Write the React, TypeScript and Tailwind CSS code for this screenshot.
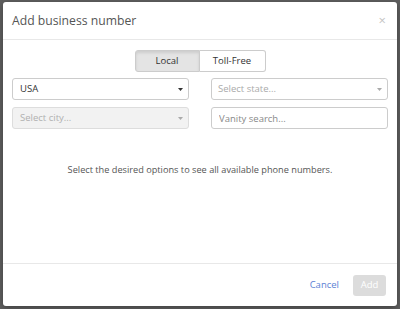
import { useState } from 'react';

function Caret({ light }: { light?: boolean }) {
    return (
        <svg width="5" height="3" viewBox="0 0 5 3" className={light ? 'text-[#aaa]' : 'text-[#333]'}>
            <path d="M0 0h5L2.5 3z" fill="currentColor" />
        </svg>
    );
}

export default function App() {
    const [mode, setMode] = useState<'local' | 'toll'>('local');

    return (
        <div className="w-[400px] h-[309px] bg-[#5e5e5e] pt-[2px] pl-[3px] pr-[3px] pb-[3px] font-['Open_Sans',sans-serif] text-[#555]">
            {/* Modal */}
            <div className="h-[304px] bg-white rounded-[3px] flex flex-col shadow-[0_2px_6px_rgba(0,0,0,0.3)]">
                {/* Header */}
                <div className="h-[38px] flex items-center justify-between pl-[9px] pr-[11px] border-b border-[#e8e8e8]">
                    <h2 className="text-[12.2px] text-[#555] pt-[2px]">Add business number</h2>
                    <button className="text-[#c4c4c4] text-[13px] leading-none">×</button>
                </div>

                {/* Body */}
                <div className="flex-1 px-[9px] pt-[10px]">
                    <div className="flex justify-center">
                        <div className="flex">
                            <button
                                onClick={() => setMode('local')}
                                className={`w-[65px] h-[22px] text-[9.5px] text-[#333] border border-[#ccc] rounded-l-[3px] ${mode === 'local' ? 'bg-[#e4e4e4] shadow-[inset_0_2px_3px_rgba(0,0,0,0.1)]' : 'bg-white'}`}
                            >
                                Local
                            </button>
                            <button
                                onClick={() => setMode('toll')}
                                className={`w-[66px] h-[22px] text-[9.5px] text-[#333] border border-l-0 border-[#ccc] rounded-r-[3px] ${mode === 'toll' ? 'bg-[#e4e4e4] shadow-[inset_0_2px_3px_rgba(0,0,0,0.1)]' : 'bg-white'}`}
                            >
                                Toll-Free
                            </button>
                        </div>
                    </div>

                    <div className="grid grid-cols-[177px_177px] justify-between gap-y-[7px] mt-[6px]">
                        <div className="h-[22px] border border-[#ccc] rounded-[3px] flex items-center justify-between pl-[7px] pr-[5px] text-[9.5px] text-[#333]">
                            <span>USA</span>
                            <Caret />
                        </div>
                        <div className="h-[22px] border border-[#ccc] rounded-[3px] flex items-center justify-between pl-[6px] pr-[5px] text-[9.5px] text-[#aaa]">
                            <span>Select state...</span>
                            <Caret light />
                        </div>
                        <div className="h-[22px] border border-[#ddd] bg-[#f2f2f2] rounded-[3px] flex items-center justify-between pl-[7px] pr-[5px] text-[9.5px] text-[#b0b0b0]">
                            <span>Select city...</span>
                            <Caret light />
                        </div>
                        <input
                            placeholder="Vanity search..."
                            className="h-[22px] border border-[#ccc] rounded-[3px] px-[7px] text-[9.5px] text-[#333] placeholder:text-[#888] outline-none"
                        />
                    </div>

                    <p className="text-center text-[9.2px] text-[#555] mt-[34px]">
                        Select the desired options to see all available phone numbers.
                    </p>
                </div>

                {/* Footer */}
                <div className="h-[43px] border-t border-[#e8e8e8] flex items-center justify-end gap-[14px] pr-[11px]">
                    <button className="text-[9.5px] text-[#5b7fd4]">Cancel</button>
                    <button className="w-[33px] h-[21px] rounded-[3px] bg-[#dcdcdc] text-[9.5px] text-white">Add</button>
                </div>
            </div>
        </div>
    );
}
